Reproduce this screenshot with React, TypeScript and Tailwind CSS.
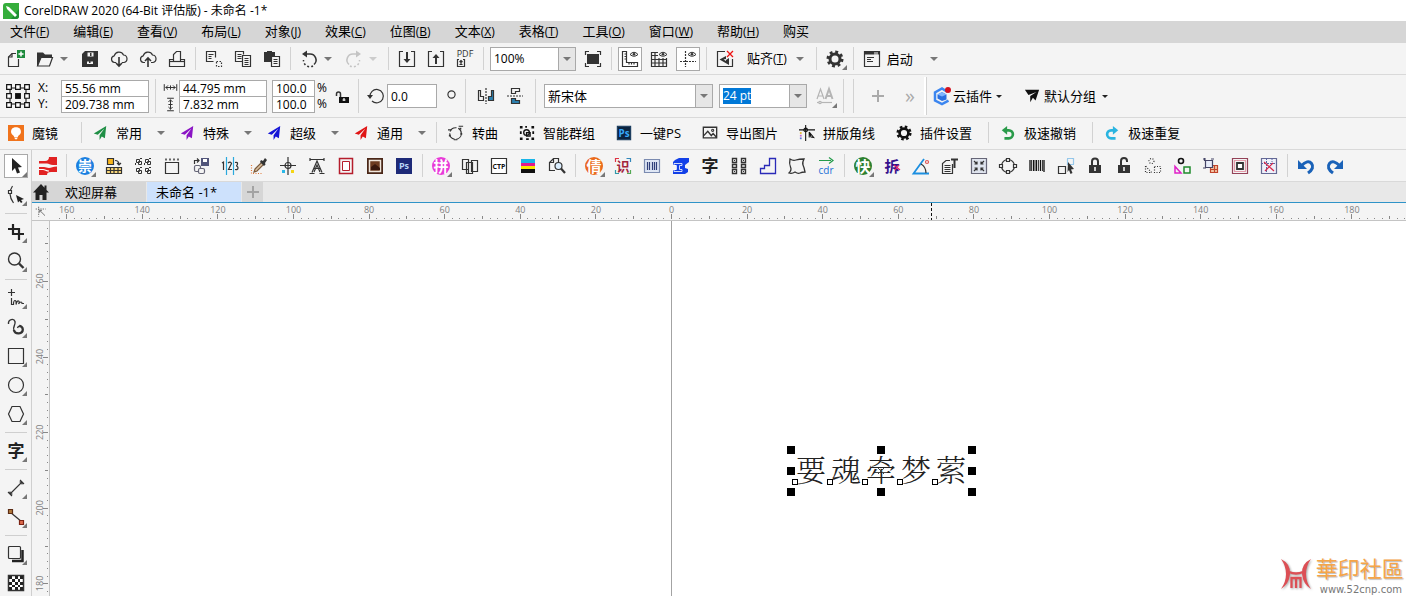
import type { ReactNode } from 'react'

const D = '#333'
const PAPER = '#f4f4f4'

const glyph = (char: string, color: string, size = 16) => (
  <text x="9" y={9 + size * 0.37} textAnchor="middle" fontSize={size} fontWeight="700" fill={color} stroke="none">
    {char}
  </text>
)

const plane = (color: string) => (
  <path d="M16 1L2 9.5l4.5 1.5L14 4 8.5 11.5V17l2.5-4 3.5 2z" fill={color} stroke="none" />
)

const gear = (
  <>
    <circle cx="9" cy="9" r="5" strokeWidth="3" />
    <circle cx="9" cy="9" r="7" strokeWidth="3" strokeDasharray="2.8 2.7" />
  </>
)

const cloud = 'M6 12.5H4.5a3.4 3.4 0 0 1-.3-6.7A5 5 0 0 1 13.5 5a3.8 3.8 0 0 1 .5 7.5h-2'

// All drawings share an 18 x 18 grid
const icons: Record<string, ReactNode> = {
  new: (
    <>
      <path d="M9 3.5H5L1.5 7v9.5h10V9" />
      <path d="M1.5 7H5V3.5" />
      <path d="M10 0h8v8h-8z" fill="#1d8a3c" stroke="none" />
      <path d="M14 1.500v5M11.500 4h5" stroke="#fff" strokeWidth="1.500" />
    </>
  ),
  open: (
    <>
      <path d="M1 2.500h6l2 2h7v3H5L2.500 16H1z" fill={D} stroke="none" />
      <path d="M5 7.500h11.500l-3 8.500h-12z" fill={PAPER} />
    </>
  ),
  save: (
    <>
      <path d="M4 1h13v16H1V4z" fill={D} stroke="none" />
      <path d="M6.500 2.500h6v4h-6zM6 11.500h6v2.500H6z" fill={PAPER} stroke="none" />
      <path d="M9 3h1.500v3H9zM8 11h1.500v2H8z" fill={D} stroke="none" />
    </>
  ),
  cloudDown: (
    <>
      <path d={cloud} />
      <path d="M9 7v9M6 13l3 3 3-3" strokeWidth="1.6" />
    </>
  ),
  cloudUp: (
    <>
      <path d={cloud} />
      <path d="M9 17V8M6 11l3-3 3 3" strokeWidth="1.6" />
    </>
  ),
  print: (
    <>
      <path d="M5.500 11.500v-7l3-3h4v10" />
      <path d="M5 9.500H1.500v7h15v-7h-4" />
      <path d="M1.500 11.500h15" />
    </>
  ),
  cut: (
    <>
      <path d="M8.500 11.500h-7v-10h9v6M3.500 4.500h5M3.500 6.500h3M3.500 8.500h3" />
      <path d="M11.500 11.500h5v5h-5z" strokeDasharray="1.500 1.500" />
    </>
  ),
  copy: (
    <>
      <path d="M9 11.500H1.500v-10h8v3M3.500 4.500h4M3.500 6.500h4M3.500 8.500h4" />
      <path d="M8.500 5.500h8v11h-8zM10.500 8.500h4M10.500 10.500h4M10.500 12.500h4M10.500 14.500h4" fill={PAPER} />
    </>
  ),
  paste: (
    <>
      <path d="M1 2h3V1h5v1h3v10H1z" fill={D} stroke="none" />
      <path d="M8.500 6.500h8v10h-8zM10.500 9.500h4M10.500 11.500h4M10.500 13.500h4" fill={PAPER} />
    </>
  ),
  undo: (
    <>
      <path d="M5 4h5a6 6 0 0 1 4 10.500" strokeWidth="1.500" />
      <path d="M13 16a6.500 6.500 0 0 1-9.500-6" strokeWidth="1.500" strokeDasharray="2 2" />
      <path d="M7 .5L2 4l5 3.500z" fill={D} stroke="none" />
    </>
  ),
  redo: (
    <g stroke="#c4c4c4">
      <path d="M13 4H8a6 6 0 0 0-4 10.500" strokeWidth="1.500" />
      <path d="M5 16a6.500 6.500 0 0 0 9.500-6" strokeWidth="1.500" strokeDasharray="2 2" />
      <path d="M11 .5L16 4l-5 3.500z" fill="#c4c4c4" stroke="none" />
    </g>
  ),
  import: (
    <>
      <path d="M5 1.500H1.500v15h15v-15H13" />
      <path d="M9 2v10" strokeWidth="2" />
      <path d="M5.500 9L9 13l3.500-4z" fill={D} stroke="none" />
    </>
  ),
  export: (
    <>
      <path d="M5 1.500H1.500v15h15v-15H13" />
      <path d="M9 6v8" strokeWidth="2" />
      <path d="M5.500 8L9 4l3.500 4z" fill={D} stroke="none" />
    </>
  ),
  pdf: (
    <>
      <text x="9" y="7" textAnchor="middle" fontSize="9" fill={D} stroke="none">PDF</text>
      <path d="M3 9.500H1.500v7h7v-7H7M5 15v-5M3.500 12L5 10.500 6.500 12M3.500 14.500h3" />
    </>
  ),
  fullscreen: (
    <>
      <path d="M3 4h12v10H3z" fill={D} stroke="none" />
      <path d="M1.500 5V1.500H5M13 1.500h3.500V5M16.500 13v3.500H13M5 16.500H1.500V13" />
    </>
  ),
  ruler: (
    <>
      <path d="M1.500 1.500h4v11h11v4h-15zM3.500 4h2M3.500 6.500h2M3.500 9h2M8 14.500v-2M10.500 14.500v-2M13 14.500v-2" />
      <path d="M9 4.500q4-4.500 8 0q-4 3.500-8 0z" strokeWidth="1" />
      <circle cx="13" cy="4.200" r="1.300" fill={D} stroke="none" />
    </>
  ),
  grid: (
    <>
      <path d="M8 2.500H1.500v14h15V8M1.500 5.500H8M1.500 9.500h15M1.500 13h15M5 2.500v14M9 8v8.500M13 8v8.500" />
      <path d="M9 4.500q4-4.500 8 0q-4 3.500-8 0z" strokeWidth="1" />
      <circle cx="13" cy="4.200" r="1.300" fill={D} stroke="none" />
    </>
  ),
  guides: (
    <>
      <path d="M6.500 1v16M1 11.500h16" strokeDasharray="2 1" />
      <path d="M9 4.500q4-4.500 8 0q-4 3.500-8 0z" strokeWidth="1" />
      <circle cx="13" cy="4.200" r="1.300" fill={D} stroke="none" />
    </>
  ),
  snapOff: (
    <>
      <path d="M9 1.500H1.500v15h15V9" />
      <path d="M3.500 9.500L10 6v3l-2.500.500L10 11v-1l3-2v7z" fill={D} stroke="none" />
      <path d="M11 1l6 6M17 1l-6 6" stroke="#e11" strokeWidth="1.300" />
    </>
  ),
  options: <g>{gear}</g>,
  launch: (
    <>
      <path d="M1.500 1.500h15v15h-15z" />
      <path d="M1.500 3h15" strokeWidth="3" strokeDasharray="10 1 1 1" />
      <path d="M4 7.500h7M4 9.500h4M4 11.500h6" />
    </>
  ),
  lock: (
    <>
      <path d="M5.500 10V7a1.500 1.500 0 0 0-4 0v2" strokeWidth="1.500" />
      <path d="M4 10h10v6H4z" fill="#111" stroke="none" />
      <path d="M9 11v3M7.500 13h3" stroke="#fff" />
    </>
  ),
  rotate: (
    <>
      <path d="M3 10a6.700 6.700 0 1 1 2 4" />
      <path d="M0 8h6l-3 4z" fill={D} stroke="none" />
    </>
  ),
  mirrorH: (
    <>
      <path d="M1.500 3.500h2v6h3v4h-5z" />
      <path d="M9 1v16" strokeDasharray="2 1" />
      <path d="M16.500 3.500h-2v6h-3v4h5z" fill="#2c7fae" />
    </>
  ),
  mirrorV: (
    <>
      <path d="M5.500 6.500v-5h8v3h-4v2z" />
      <path d="M1 9h16" strokeDasharray="2 1" />
      <path d="M5.500 11.500v5h8v-3h-4v-2z" fill="#2c7fae" />
    </>
  ),
  fontStyle: (
    <g stroke="#b5b5b5">
      <path d="M1 12L4.500 2 8 12M2.500 9h4" />
      <path d="M9.500 12L13 2l3.500 10M11 9h4" strokeWidth="2" />
      <path d="M1 15.500h15" />
      <circle cx="4" cy="15.500" r="1.200" fill={PAPER} />
    </g>
  ),
  hexagon: (
    <>
      <path d="M14.500 5L9 1.500 2 5.500v8L9 17.200l6.500-3.500" stroke="#3c86f0" strokeWidth="2.500" />
      <path d="M9 5l4.500 2.500v5L9 14l-4.500-2.500v-4z" fill="#2a6fe0" stroke="none" />
      <path d="M9 5l4.500 2.500L9 9.500 4.500 7.500z" fill="#7fb4ff" stroke="none" />
      <circle cx="15" cy="3" r="3" fill="#d3121f" stroke="none" />
    </>
  ),
  send: <path d="M1 2h16l-4 12-3-3-3 5V9l7-4.500L5 8z" fill="#111" stroke="none" />,
  mirror: (
    <>
      <path d="M0 0h18v18H0z" fill="#f0731c" stroke="none" />
      <path d="M9 2.500c4 0 6 2.500 5.500 6-.5 2.500-3 3-3.500 5H7c-.5-2-3-2.500-3.500-5-.5-3.500 1.500-6 5.500-6zM7 14h4l-1 2H8z" fill="#fff" stroke="none" />
    </>
  ),
  planeGreen: plane('#1f8f45'),
  planePurple: plane('#8a14c4'),
  planeBlue: plane('#1414d6'),
  planeRed: plane('#e01414'),
  curve: (
    <>
      <circle cx="8.500" cy="9.500" r="6.500" strokeDasharray="9 2" />
      <path d="M12 1.500h5M0 5.500h4M6.500 16.500h4" />
      <path d="M13 3h2v2h-2zM1 11h2v2H1zM14 9h2v2h-2z" fill={D} stroke="none" />
    </>
  ),
  group: (
    <g fill="#111" stroke="none">
      <path d="M1 1h3v3H1zM7 1h2v2H7zM14 1h3v3h-3zM1 7h2v3H1zM15 7h2v3h-2zM1 14h3v3H1zM8 15h3v2H8zM14 14h3v3h-3z" />
      <circle cx="8.500" cy="8.500" r="3.200" fill="none" stroke="#111" strokeWidth="1.500" />
      <path d="M8.500 8.500h4v4h-4z" fill="none" stroke="#111" strokeWidth="1.500" />
    </g>
  ),
  ps: (
    <>
      <path d="M1.500 1.500h15v15h-15z" fill="#0b2440" stroke="#163a5c" />
      <text x="9" y="13" textAnchor="middle" fontSize="11" fontWeight="700" fill="#38a8f8" stroke="none">Ps</text>
    </>
  ),
  picture: (
    <>
      <path d="M1.500 2.500h15v12h-15zM2 12l4.500-5 4 5 2-2.500 3.500 4" strokeWidth="1.500" />
      <circle cx="12" cy="6" r="1.200" />
    </>
  ),
  cropMarks: (
    <>
      <path d="M7.500 0v18M0 5.500h18M11.500 8v6M11.500 8l5 6-3-.5z" stroke="#111" />
      <circle cx="7.500" cy="5.500" r="2" stroke="#111" />
      <path d="M1 8h2v2H1z" fill="#e5b733" stroke="none" />
      <path d="M1 11h2v2H1z" fill="#c569c9" stroke="none" />
      <path d="M1 14h2v2H1z" fill="#5878d8" stroke="none" />
    </>
  ),
  gearBlack: <g stroke="#111">{gear}</g>,
  fastUndo: (
    <>
      <path d="M6 6h4a4.200 4.200 0 0 1 0 9H5" stroke="#2a9b4a" strokeWidth="3" />
      <path d="M8 1v10L2 6z" fill="#2a9b4a" stroke="none" />
    </>
  ),
  fastRedo: (
    <>
      <path d="M12 6H8a4.200 4.200 0 0 0 0 9h5" stroke="#2ab4e0" strokeWidth="3" />
      <path d="M10 1v10l6-5z" fill="#2ab4e0" stroke="none" />
    </>
  ),
  redFlag: (
    <>
      <path d="M10 0h8v8h-4c-3 0-4-1.500-6-1.500H0V4h6c2.500 0 4-1.500 4-4z" fill="#e12222" stroke="none" />
      <path d="M0 10h5c2 0 3 1 5 1s4-1.500 8-1.500V15h-6c-3 0-4 1-4 3H0z" fill="#e12222" stroke="none" />
      <path d="M0 12.500h4c2.500 0 3 1.500 6 1.500" stroke="#fff" />
    </>
  ),
  chong: (
    <>
      <circle cx="9" cy="9" r="9" fill="#1b7fe0" stroke="none" />
      {glyph('崇', '#fff', 14)}
    </>
  ),
  tableFill: (
    <>
      <path d="M2.500 1.500h6v6h-6z" fill="#f9b51b" />
      <path d="M10 3.500q4 0 4 4M12 6l2 2 2-2" />
      <path d="M1.500 10.500h15v6h-15z" fill="#fbd87a" />
      <path d="M1.500 13.500h15M5.500 10.500v6M9 10.500v6M13 10.500v6" />
    </>
  ),
  links: (
    <g strokeWidth="1">
      <path d="M2.500 2.500h3v3h-3zM4.500 4.500h3v3h-3zM11.500 2.500h3v3h-3zM13.500 4.500h3v3h-3zM2.500 11.500h3v3h-3zM4.500 13.500h3v3h-3zM11.500 11.500h3v3h-3zM13.500 13.500h3v3h-3z" />
      <path d="M6 1.500h2M1.500 6v2M15 1.500h2M10.500 6v2M6 10.500h2M15 10.500h2" />
    </g>
  ),
  pageFrame: (
    <>
      <path d="M2.500 5.500h13v11h-13z" />
      <path d="M2 2.500h15" strokeWidth="2" strokeDasharray="2 2" stroke="#666" />
    </>
  ),
  saveSwap: (
    <>
      <path d="M9 1h8v8H9z" fill="#51557a" stroke="none" />
      <path d="M11 2h4v3h-4z" fill="#fff" stroke="none" />
      <path d="M2.500 7V3.500H7M5 1.500l2 2-2 2" />
      <rect x="2.500" y="8.500" width="6" height="6" rx="1.500" stroke="#667" />
      <rect x="6.500" y="11.500" width="6" height="5" rx="1.500" fill={PAPER} stroke="#667" />
    </>
  ),
  numbering: (
    <>
      <path d="M5.500 0v18M12.500 0v18" stroke="#2aa9dd" />
      <path d="M1 6l1.500-1v8M7 6q2.500-2 3.500 0.500L7.500 12.500H11M14 5.500q3-.5 2.500 1.500T15 9q2 0 2 2t-3 1.500" />
    </>
  ),
  eyedropper: (
    <>
      <path d="M5 12l7-7 2 2-7 7-3 1z" fill="#d9c0a0" stroke="#7a5a3c" />
      <path d="M11 3l2 1 2-3 2 2-2 3 .5 1.500L14 9 10 5z" fill={D} stroke="none" />
      <path d="M1.500 8v8.500H12" stroke="#e07838" strokeDasharray="1 1.500" />
    </>
  ),
  registration: (
    <>
      <circle cx="9" cy="8.500" r="3" />
      <path d="M9 0v18M1 8.500h16" />
      <path d="M3 13h3v3H3z" fill="#2ab8e8" stroke="none" />
      <path d="M12 13h3v3h-3z" fill="#f4d515" stroke="none" />
    </>
  ),
  textSpan: (
    <>
      <path d="M2 2.500h14M2 1v3M16 1v3M4 15.500L9 4l5 11.500M6 11.500h6" />
      <path d="M1.500 16.500h5M11.500 16.500h5M6 15L9 8l3 7" />
    </>
  ),
  redFrame: (
    <>
      <path d="M2.500 1.500h13v15h-13z" stroke="#b51d2c" strokeWidth="1.500" />
      <path d="M5.500 4.500h7v9h-7z" stroke="#b51d2c" strokeWidth="1" fill="#fff" />
    </>
  ),
  photo: (
    <>
      <path d="M1 1h16v16H1z" fill="#4a2718" stroke="none" />
      <path d="M3.500 3.500h11v11h-11z" fill="#6d3b20" stroke="#f0e6dc" strokeWidth="1.500" />
      <path d="M5 10l4-3 5 4v2H5z" fill="#39180d" stroke="none" />
    </>
  ),
  psBlue: (
    <>
      <path d="M1 1h16v16H1z" fill="#1e2a78" stroke="none" />
      <text x="9" y="12" textAnchor="middle" fontSize="9" fontWeight="700" fill="#b9d5f5" stroke="none">Ps</text>
    </>
  ),
  pin: (
    <>
      <circle cx="9" cy="9" r="9" fill="#e83ad8" stroke="none" />
      {glyph('拼', '#fff', 15)}
    </>
  ),
  artboards: <path d="M1.500 2.500h6v10h-6zM5.500 5.500h6v11h-6zM10.500 3.500h6v11h-6zM7.500 2.500v14" />,
  ctp: (
    <>
      <path d="M1.500 1.500h15v15h-15z" fill="#fff" />
      <text x="9" y="12" textAnchor="middle" fontSize="7" fontWeight="700" fill="#111" stroke="none">CTP</text>
    </>
  ),
  cmyk: (
    <g stroke="none">
      <path d="M2 2h14v4H2z" fill="#19b5e8" />
      <path d="M2 6h14v3H2z" fill="#e11a8c" />
      <path d="M2 9h14v3H2z" fill="#fbe800" />
      <path d="M2 12h14v4H2z" fill="#111" />
    </g>
  ),
  search: (
    <>
      <path d="M7 13.500H1.500v-8l4-4h5v4M5.500 1.500v4h-4" />
      <circle cx="10.500" cy="9" r="3.500" fill="#dcefff" />
      <path d="M13 11.500l4 4.500" strokeWidth="2.200" />
    </>
  ),
  xin: (
    <>
      <circle cx="9" cy="9" r="9" fill="#ea6a1c" stroke="none" />
      {glyph('倩', '#fff', 15)}
    </>
  ),
  shi: (
    <>
      <path d="M1.500 5V1.500H5" stroke="#d34" />
      <path d="M12.500 1.500h4V5" stroke="#38b" />
      <path d="M1.500 13v3.500H5" stroke="#39a" />
      <path d="M16.500 13v3.500H13" stroke="#5a5" />
      {glyph('识', '#a3243c', 13)}
    </>
  ),
  barcodeBlue: (
    <>
      <path d="M1.500 2.500h15v13h-15z" fill="#dfe7f5" stroke="#7b8bb0" />
      <path d="M4.500 5v8M6.500 5v8M9.500 5v8M11.500 5v8M13.500 5v8" stroke="#30407a" />
    </>
  ),
  extrude: (
    <>
      <path d="M3 3l4-2h10v4l-4 3v3l3 1v3l-3 2H1v-4h3V8H1V5z" fill="#1340e8" stroke="none" />
      <path d="M2 6.500h8v2H7.500v4H10v2H2v-2h2.500v-4H2z" stroke="#fff" strokeWidth=".8" />
    </>
  ),
  zi: glyph('字', '#222', 17),
  qrBlocks: (
    <>
      <path d="M2.500 1.500h4v4h-4zM11.500 1.500h4v4h-4zM2.500 7.500h4v3h-4zM11.500 7.500h4v3h-4zM2.500 12.500h4v4h-4zM11.500 12.500h4v4h-4z" strokeWidth="1.400" />
      <path d="M4 3h1v1H4zM13 3h1v1h-1zM4 14h1v1H4zM13 14h1v1h-1z" fill={D} stroke="none" />
    </>
  ),
  stairs: <path d="M1.500 16.500v-5h4v-3h5v-7h6v15z" stroke="#2a2ab8" strokeWidth="1.300" />,
  blob: <path d="M2 2q3 2 6 1t8-1q-2 4-1 6t2 7q-3 0-5 1t-5-1q-3 2-6 1 3-3 1.500-6T2 2z" strokeWidth="1.300" />,
  cdr: (
    <>
      <path d="M2 3.500h12M12 .5l4 3-4 3" stroke="#239b4a" />
      <text x="9" y="16.500" textAnchor="middle" fontSize="10" fill="#1a6fd6" stroke="none">cdr</text>
    </>
  ),
  kuai: (
    <>
      <circle cx="9" cy="9" r="9" fill="#2c8030" stroke="none" />
      {glyph('快', '#fff', 15)}
    </>
  ),
  chai: (
    <>
      {glyph('拆', '#34108c', 15)}
      <path d="M11 8l6 5M16 8l-4 5" stroke="#e3206a" />
    </>
  ),
  angle: (
    <>
      <path d="M12 2L1.500 16.500h15.500" stroke="#1c8fe0" strokeWidth="1.800" />
      <path d="M9 7q5 3 5 9" />
      <circle cx="15" cy="5" r="1.500" stroke="#d55" />
    </>
  ),
  docText: (
    <>
      <path d="M9 3.500H5L1.500 6.500v10h10V7M3.500 8.500h6M3.500 10.500h6M3.500 12.500h6M3.500 14.500h6" />
      <path d="M10 2.500h7M13.500 2.500V11" strokeWidth="2" />
    </>
  ),
  shrink: (
    <>
      <path d="M1.500 1.500h15v15h-15z" fill="#dfe4ee" stroke="#667" />
      <path d="M4 4l3 3M14 4l-3 3M4 14l3-3M14 14l-3-3M7 4.500V7H4.500M11 4.500V7h2.500M7 13.500V11H4.500M11 13.500V11h2.500" />
    </>
  ),
  nodes: (
    <>
      <circle cx="9" cy="9" r="6.500" />
      <path d="M7.500 1.500h3v3h-3zM7.500 13.500h3v3h-3zM.5 7.500h3v3h-3zM14.500 7.500h3v3h-3z" fill={PAPER} />
    </>
  ),
  barcode: (
    <g stroke="#111">
      <path d="M2 3v11M5.500 3v11M8.500 3v11M12.500 3v11M16 3v12" strokeWidth="1.300" />
      <path d="M3.500 3v11M7 3v11M10.500 3v11M14.500 3v11" strokeWidth=".8" />
    </g>
  ),
  selectTarget: (
    <>
      <path d="M1.500 9.500h7v7h-7z" />
      <path d="M10.500 1.500h6v6h-6z" stroke="#3a9be0" strokeDasharray="1 1" />
      <path d="M11 5l6 7-3 .5 1.500 3.500-2 1L12 13l-1.500 2z" fill={D} stroke="none" />
    </>
  ),
  padlock: (
    <>
      <path d="M6 8V4.500a3 3 0 0 1 6 0V8" strokeWidth="2" />
      <path d="M3 8h12v8H3z" fill={D} stroke="none" />
      <path d="M9 10v4" stroke="#fff" strokeWidth="1.500" />
    </>
  ),
  padlockOpen: (
    <>
      <path d="M6 8V4a3 3 0 0 1 6 0v1" strokeWidth="2" />
      <path d="M3 8h12v8H3z" fill={D} stroke="none" />
      <path d="M9 10v4" stroke="#fff" strokeWidth="1.500" />
    </>
  ),
  dotted: (
    <g strokeDasharray="1 1.500">
      <circle cx="7.500" cy="4" r="2.500" />
      <path d="M1.500 9v6.500h6zM10.500 9.500h6v6h-6z" />
    </g>
  ),
  shapes: (
    <>
      <circle cx="8" cy="4" r="2.500" stroke="#111" strokeWidth="1.600" />
      <path d="M2 9.500v6.500h6z" stroke="#e020c8" strokeWidth="1.500" />
      <path d="M11 10h6v6h-6z" stroke="#1f8a2c" strokeWidth="1.500" />
    </>
  ),
  overlap: (
    <>
      <path d="M8.500 8.500h7v7h-7z" fill="#f3c7a7" stroke="#c2452b" />
      <path d="M8.500 12.500h7M12.500 8.500v7" stroke="#c2452b" />
      <path d="M3.500 3.500h7v7h-7z" fill="#e8edfa" stroke="#446" />
      <path d="M1 2h3M2.500 1v3M9 2h3M1 11h3" stroke="#446" />
    </>
  ),
  frameIn: (
    <>
      <path d="M1.500 1.500h15v15h-15z" stroke="#944258" />
      <path d="M3.500 3.500h11v11h-11z" stroke="#d3435e" strokeDasharray="1 1" />
      <path d="M6 6h6v6H6z" fill="#fff" strokeWidth="1.800" />
    </>
  ),
  frameCross: (
    <>
      <path d="M1.500 1.500h15v15h-15z" stroke="#666a94" fill="#eef0fa" />
      <path d="M6.500 1v16M1 6.500h16M12 1v4" stroke="#5a64a0" strokeDasharray="2 1" strokeWidth="1" />
      <path d="M4 5l10 9M13 6l-8 8" stroke="#d8264a" />
    </>
  ),
  boldUndo: (
    <>
      <path d="M4 9q7-7 10.500-2.500T11 16" stroke="#1a62b8" strokeWidth="3" />
      <path d="M1 3v9h9z" fill="#1a62b8" stroke="none" />
    </>
  ),
  boldRedo: (
    <>
      <path d="M14 9Q7 2 3.500 6.500T7 16" stroke="#1a62b8" strokeWidth="3" />
      <path d="M17 3v9H8z" fill="#1a62b8" stroke="none" />
    </>
  ),
  pick: <path d="M5 1v13l3-3 2 5.500 3-1L11 10.500l4-.5z" fill="#222" stroke="none" />,
  shape: (
    <>
      <path d="M5.500 0Q0 8 6.500 17" />
      <path d="M1.500 4.500h3v3h-3z" fill={PAPER} />
      <path d="M9 9l8 4-3 1 1.500 2-1.500 1-1.500-2-1.500 1.500z" fill="#222" stroke="none" />
    </>
  ),
  crop: <path d="M6 1v5.500M6 6v5h11M1 6h11v11" stroke="#222" strokeWidth="2.200" />,
  zoom: (
    <>
      <circle cx="7.500" cy="7" r="6" strokeWidth="1.400" />
      <path d="M12 11.500l4.500 4.500" strokeWidth="2.400" />
    </>
  ),
  freehand: (
    <>
      <path d="M4.500 0v7M1 3.500h7" />
      <path d="M4.500 9v6.500h2q0-4 1.500-4t1 4q1-4 2.500-3.500t0 3q1.500-2 2.500-2t1 1.500h2" />
    </>
  ),
  artistic: (
    <>
      <path d="M1.500 6C1 1 7 0 8 3.500s-3 6-1 9" strokeWidth="1.400" />
      <path d="M6.800 12c1.500 5 9 4 9-.5 0-2.500-2-3.500-3.500-3.500" strokeWidth="2.300" />
      <path d="M13 8q-2 0-2.500 2" strokeWidth="1.400" />
    </>
  ),
  rect: <path d="M1.500 1.500h15v15h-15z" />,
  ellipse: <circle cx="9" cy="9" r="7.500" />,
  polygon: <path d="M5 1.500h8l3.500 7.500-3.500 7.500H5L1.500 9z" />,
  text: glyph('字', '#222', 17),
  dimension: <path d="M3 15L15 3M1 13l4 4M13 1l4 4M3 12.500V15h2.500M12.500 3H15v2.500" strokeWidth="1.100" />,
  connector: (
    <>
      <path d="M3 4l12 10" />
      <path d="M1.500 1.500h4v4h-4z" fill="#b07a3c" stroke="#5c2c14" />
      <path d="M12.500 12.500h4v4h-4z" fill="#dc6a4c" stroke="#7c2414" />
    </>
  ),
  shadow: (
    <>
      <path d="M15.500 5v11H5" strokeWidth="2.500" stroke="#222" />
      <rect x="1.500" y="1.500" width="12" height="12" rx="1" fill={PAPER} />
    </>
  ),
  transparency: (
    <>
      <path d="M1.500 1.500h15v15h-15z" fill="#fff" strokeWidth="1.500" />
      <path
        d="M2 2h3v3H2zM8 2h3v3H8zM13 2h3v3h-3zM5 5h3v3H5zM11 5h2v3h-2zM2 8h3v3H2zM8 8h3v3H8zM13 8h3v3h-3zM5 11h3v2H5zM11 11h2v2h-2zM2 13h3v3H2zM8 13h3v3H8zM13 13h3v3h-3z"
        fill="#222"
        stroke="none"
      />
    </>
  ),
  origin: (
    <>
      <path d="M3 3h12v12H3z" stroke="#111" strokeWidth=".8" />
      <path
        d="M.5.500h3.500v3.500H.5zM7.200 .500h3.500v3.500H7.200zM14 .500h3.500v3.500H14zM.5 7.200h3.500v3.500H.5zM14 7.200h3.500v3.500H14zM.5 14h3.500v3.500H.5zM7.200 14h3.500v3.500H7.200zM14 14h3.500v3.500H14z"
        fill="#fff"
        stroke="#111"
        strokeWidth=".9"
      />
      <path d="M6.800 6.800h4.400v4.400H6.800z" fill="#111" stroke="none" />
    </>
  ),
  widthArrow: <path d="M1.500 5v8M16.500 5v8M3 9h12M6 6.500L3.500 9 6 11.500M12 6.500l2.500 2.500-2.500 2.500M9 6.500v5" />,
  heightArrow: <path d="M5 1.500h8M5 16.500h8M9 3v12M6.500 6L9 3.500 11.500 6M6.500 12l2.500 2.500 2.500-2.500M6.500 9h5" />,
  home: <path d="M9 1L1 9.500h2.500V17H7.500v-5h3v5h4V9.500H17L14.500 7V2.500h-2v2.200z" fill="#222" stroke="none" />,
  rulerCorner: (
    <g stroke="#555">
      <path d="M1 4.500h15M5.500 1v15" strokeDasharray="2 1.500" />
      <path d="M7 6.500l8 8M7 10V6.500h3.500" />
    </g>
  ),
}

function Icon({ name, className = 'size-[18px]' }: { name: string; className?: string }) {
  return (
    <svg
      viewBox="0 0 18 18"
      fill="none"
      stroke={D}
      strokeWidth="1.2"
      className={`shrink-0 overflow-visible ${className}`}
      aria-hidden="true"
    >
      {icons[name]}
    </svg>
  )
}

function Caret({ dark = false, faded = false }: { dark?: boolean; faded?: boolean }) {
  return (
    <svg viewBox="0 0 8 4" className={dark ? 'h-[3px] w-1.5' : 'h-1 w-2'} aria-hidden="true">
      <path d="M0 0h8L4 4z" fill={dark ? '#222' : faded ? '#ccc' : '#777'} />
    </svg>
  )
}

function Tool({ name, flyout, boxed }: { name: string; flyout?: boolean; boxed?: boolean }) {
  return (
    <button type="button" aria-label={name} className="relative flex h-[29px] w-[29px] shrink-0 items-center justify-center">
      <span className={boxed ? 'flex size-6 items-center justify-center border border-[#a9a9a9] bg-white' : 'flex'}>
        <Icon name={name} />
      </span>
      {flyout && (
        <svg viewBox="0 0 5 5" className="absolute right-[3px] bottom-[3px] size-[5px]" aria-hidden="true">
          <path d="M5 0v5H0z" fill="#777" />
        </svg>
      )}
    </button>
  )
}

function CaretButton({ label, faded }: { label: string; faded?: boolean }) {
  return (
    <button type="button" aria-label={label} className="flex h-6 w-4 shrink-0 items-center pl-px">
      <Caret faded={faded} />
    </button>
  )
}

function Sep() {
  return (
    <div className="flex w-2 shrink-0 justify-center self-stretch py-1">
      <div className="w-px bg-[#d2d2d2]" />
    </div>
  )
}

function Combo({ label, value, width }: { label: string; value: string; width: string }) {
  return (
    <div className={`relative h-6 shrink-0 ${width}`}>
      <select aria-label={label} defaultValue={value} className="size-full appearance-none border border-[#a9a9a9] bg-white pl-[3px] leading-none">
        <option>{value}</option>
      </select>
      <span className="pointer-events-none absolute inset-y-px right-px flex w-[17px] items-center justify-center border-l border-[#a9a9a9] bg-[#e6e6e6]">
        <Caret />
      </span>
    </div>
  )
}

const field = 'block w-full border border-[#a9a9a9] bg-white px-[3px] text-xs'

const menus = [
  ['文件', 'F'],
  ['编辑', 'E'],
  ['查看', 'V'],
  ['布局', 'L'],
  ['对象', 'J'],
  ['效果', 'C'],
  ['位图', 'B'],
  ['文本', 'X'],
  ['表格', 'T'],
  ['工具', 'O'],
  ['窗口', 'W'],
  ['帮助', 'H'],
  ['购买', ''],
]

const planes = [
  { icon: 'planeGreen', label: '常用' },
  { icon: 'planePurple', label: '特殊' },
  { icon: 'planeBlue', label: '超级' },
  { icon: 'planeRed', label: '通用' },
]

const plugins = [
  { icon: 'curve', label: '转曲' },
  { icon: 'group', label: '智能群组' },
  { icon: 'ps', label: '一键PS' },
  { icon: 'picture', label: '导出图片' },
  { icon: 'cropMarks', label: '拼版角线' },
  { icon: 'gearBlack', label: '插件设置' },
]

// A trailing * marks a button with a flyout, | is a separator
const pluginTools =
  'redFlag | chong* tableFill links pageFrame saveSwap numbering eyedropper registration textSpan redFrame photo psBlue | pin* artboards ctp cmyk search | xin* shi barcodeBlue extrude zi qrBlocks stairs blob cdr | kuai* chai angle docText shrink nodes barcode selectTarget padlock padlockOpen dotted shapes overlap frameIn frameCross | boldUndo boldRedo'.split(' ')

const toolbox =
  'pick* shape* | crop* zoom* | freehand* artistic* rect* ellipse* polygon* | text* | dimension* connector* | shadow* transparency'.split(' ')

const STEP = 75.6

function PluginButton({ icon, label }: { icon: string; label: string }) {
  return (
    <button type="button" className="flex shrink-0 items-center gap-2">
      <Icon name={icon} className="size-4" />
      {label}
    </button>
  )
}

function TopRuler() {
  const ticks = Array.from({ length: 260 }, (_, i) => i - 81)
  return (
    <svg className="h-[17px] min-w-0 flex-1" aria-hidden="true">
      {ticks.map(t => {
        const x = Math.round(621 + (t * STEP) / 10) + 0.5
        const len = t % 10 === 0 ? 5 : t % 5 === 0 ? 3 : 1
        return <path key={t} d={`M${x} 16v-${len}`} stroke="#888" />
      })}
      {ticks.filter(t => t % 10 === 0).map(t => (
        <text key={t} x={621.5 + (t * STEP) / 10} y="10" textAnchor="middle" fontSize="9" fill="#808080">
          {Math.abs(t * 2)}
        </text>
      ))}
      <path d="M881.500 0v17" stroke="#111" strokeDasharray="3 2" />
    </svg>
  )
}

function SideRuler() {
  const ticks = Array.from({ length: 160 }, (_, i) => i - 7)
  return (
    <svg className="w-[17px] flex-1" aria-hidden="true">
      {ticks.map(t => {
        const y = Math.round(60 + (t * STEP) / 10) + 0.5
        const len = t % 10 === 0 ? 5 : t % 5 === 0 ? 3 : 1
        return <path key={t} d={`M16 ${y}h-${len}`} stroke="#888" />
      })}
      {ticks.filter(t => t % 10 === 0).map(t => {
        const y = 60 + (t * STEP) / 10
        return (
          <text key={t} x="11" y={y} transform={`rotate(-90 11 ${y})`} textAnchor="middle" fontSize="9" fill="#808080">
            {260 - t * 2}
          </text>
        )
      })}
    </svg>
  )
}

function MenuBar() {
  return (
    <nav className="flex h-[22px] shrink-0 items-center bg-[#d6d6d6] pb-0.5">
      {menus.map(([label, key]) => (
        <button type="button" key={label} className="mr-6 flex items-baseline whitespace-nowrap first:ml-2.5">
          {label}
          {key && (
            <span className="text-xs">
              (<u>{key}</u>)
            </span>
          )}
        </button>
      ))}
    </nav>
  )
}

function StandardBar() {
  return (
    <div className="flex h-8 shrink-0 items-center border-b border-[#d9d9d9] pl-px">
      <Tool name="new" />
      <Tool name="open" />
      <CaretButton label="open list" />
      <Tool name="save" />
      <Tool name="cloudDown" />
      <Tool name="cloudUp" />
      <Tool name="print" />
      <Sep />
      <Tool name="cut" />
      <Tool name="copy" />
      <Tool name="paste" />
      <Sep />
      <Tool name="undo" />
      <CaretButton label="undo list" />
      <Tool name="redo" />
      <CaretButton label="redo list" faded />
      <Sep />
      <Tool name="import" />
      <Tool name="export" />
      <Tool name="pdf" />
      <Sep />
      <div className="mr-0.5 ml-[3px] text-xs">
        <Combo label="zoom level" value="100%" width="w-[86px]" />
      </div>
      <Tool name="fullscreen" />
      <Sep />
      <Tool name="ruler" boxed />
      <Tool name="grid" />
      <Tool name="guides" boxed />
      <Sep />
      <Tool name="snapOff" />
      <button type="button" className="flex shrink-0 items-baseline px-2">
        贴齐
        <span className="text-xs">
          (<u>T</u>)
        </span>
      </button>
      <CaretButton label="snap list" />
      <div className="flex self-stretch pl-0.5"><Sep /></div>
      <Tool name="options" flyout />
      <Sep />
      <Tool name="launch" />
      <button type="button" className="shrink-0 pr-4">启动</button>
      <CaretButton label="launch list" />
    </div>
  )
}

function PropertyBar() {
  return (
    <div className="flex h-[43px] shrink-0 items-center border-b border-[#d9d9d9] pl-1.5">
      <Icon name="origin" className="size-6" />
      <div className="ml-2 grid w-[23px] shrink-0 text-xs leading-4">
        <label htmlFor="pos-x">X:</label>
        <label htmlFor="pos-y">Y:</label>
      </div>
      <div className="w-[88px] shrink-0">
        <input id="pos-x" defaultValue="55.56 mm" className={`${field} h-[17px]`} />
        <input id="pos-y" defaultValue="209.738 mm" className={`${field} -mt-px h-[17px]`} />
      </div>
      <div className="ml-0.5 flex self-stretch"><Sep /></div>
      <div className="ml-1 grid shrink-0 gap-0.5">
        <Icon name="widthArrow" className="size-[15px]" />
        <Icon name="heightArrow" className="size-[15px]" />
      </div>
      <div className="mr-[5px] ml-px w-[88px] shrink-0">
        <input aria-label="width" defaultValue="44.795 mm" className={`${field} h-[17px]`} />
        <input aria-label="height" defaultValue="7.832 mm" className={`${field} -mt-px h-[17px]`} />
      </div>
      <div className="w-[43px] shrink-0">
        <input aria-label="scale x" defaultValue="100.0" className={`${field} h-[17px]`} />
        <input aria-label="scale y" defaultValue="100.0" className={`${field} -mt-px h-[17px]`} />
      </div>
      <div className="mr-2 ml-0.5 grid shrink-0 text-xs leading-4">
        <span>%</span>
        <span>%</span>
      </div>
      <Icon name="lock" />
      <div className="mx-0.5 flex self-stretch"><Sep /></div>
      <div className="ml-0.5 flex shrink-0 items-center gap-0.5">
        <Icon name="rotate" />
        <input aria-label="rotation" defaultValue="0.0" className="h-6 w-[50px] border border-[#a9a9a9] bg-white px-[3px] text-xs" />
      </div>
      <svg viewBox="0 0 10 10" className="mr-1.5 mb-1 ml-2.5 size-[9px] shrink-0" aria-hidden="true">
        <circle cx="5" cy="5" r="4" fill="none" stroke={D} strokeWidth="1.300" />
      </svg>
      <Sep />
      <div className="flex shrink-0 px-0.5">
        <Tool name="mirrorH" />
        <Tool name="mirrorV" />
      </div>
      <Sep />
      <div className="flex shrink-0 gap-1.5 pl-1">
        <Combo label="font" value="新宋体" width="w-[169px]" />
        <div className="flex h-6 w-[88px] border border-[#a9a9a9] bg-white">
          <div className="flex flex-1 items-center pl-[3px]">
            <input aria-label="font size" defaultValue="24 pt" className="h-4 w-7 bg-[#0078d7] text-xs text-white" />
          </div>
          <button type="button" aria-label="font size list" className="flex w-[17px] items-center justify-center border-l border-[#a9a9a9] bg-[#e6e6e6]">
            <Caret />
          </button>
        </div>
      </div>
      <div className="ml-1 flex self-stretch">
        <div className="flex items-center"><Tool name="fontStyle" flyout /></div>
        <Sep />
      </div>
      <div className="flex self-stretch pl-0.5"><Sep /></div>
      <button type="button" aria-label="add" className="ml-2.5 flex w-5 shrink-0 justify-center">
        <svg viewBox="0 0 12 12" className="size-3" aria-hidden="true">
          <path d="M6 0v12M0 6h12" stroke="#aaa" strokeWidth="2" />
        </svg>
      </button>
      <button type="button" aria-label="more" className="ml-3.5 w-4 shrink-0 text-xl leading-none text-[#aaa]">»</button>
      <div className="mx-1.5 my-0.5 w-[3px] shrink-0 self-stretch border-r border-[#d2d2d2] bg-white" />
      <button type="button" className="flex shrink-0 items-center gap-0.5">
        <Icon name="hexagon" />
        云插件
        <span className="ml-0.5"><Caret dark /></span>
      </button>
      <button type="button" className="ml-[22px] flex shrink-0 items-center gap-1">
        <Icon name="send" className="size-4" />
        默认分组
        <span className="ml-0.5"><Caret dark /></span>
      </button>
    </div>
  )
}

function PluginBar() {
  return (
    <div className="flex h-8 shrink-0 items-center border-b border-[#d9d9d9] pb-0.5 pl-2">
      <PluginButton icon="mirror" label="魔镜" />
      <div className="mr-[7px] ml-[19px] flex self-stretch"><Sep /></div>
      {planes.map(p => (
        <div key={p.label} className="flex shrink-0 items-center">
          <PluginButton icon={p.icon} label={p.label} />
          <button type="button" aria-label={`${p.label} list`} className="flex h-6 w-[37px] items-center justify-center">
            <Caret />
          </button>
        </div>
      ))}
      <div className="-ml-2 flex self-stretch"><Sep /></div>
      <div className="ml-2 flex shrink-0 gap-[21px]">
        {plugins.map(p => <PluginButton key={p.label} {...p} />)}
      </div>
      <div className="mr-2 ml-3 flex self-stretch"><Sep /></div>
      <PluginButton icon="fastUndo" label="极速撤销" />
      <div className="mr-2 ml-3 flex self-stretch"><Sep /></div>
      <PluginButton icon="fastRedo" label="极速重复" />
    </div>
  )
}

const handles = [
  'left-0 top-0', 'left-[90px] top-0', 'left-[181px] top-0',
  'left-0 top-[21px]', 'left-[181px] top-[21px]',
  'left-0 top-[42px]', 'left-[90px] top-[42px]', 'left-[181px] top-[42px]',
]

function Canvas() {
  return (
    <main className="relative min-w-0 flex-1 overflow-hidden bg-white">
      <div className="absolute inset-y-0 left-[621px] w-px bg-[#a3a3a3]" />
      <div className="absolute top-[225px] left-[737px] h-[50px] w-[189px]">
        <div className="absolute top-1.5 left-[9px] flex font-['Noto_Serif_CJK_SC','Noto_Sans_CJK_SC',serif] text-[30px] leading-8 font-light text-[#222]">
          {Array.from('要魂牵梦萦').map(char => (
            <span key={char} className="relative w-[35px]">
              {char}
              <i className="absolute top-[27px] -left-1 size-1.5 border border-black bg-white" />
            </span>
          ))}
        </div>
        {handles.map(pos => <i key={pos} className={`absolute size-2 bg-black ${pos}`} />)}
        <svg viewBox="0 0 6 6" className="absolute top-[22px] left-[91px] size-1.5" aria-hidden="true">
          <path d="M0 0l6 6M6 0L0 6" stroke="#444" />
        </svg>
      </div>

      {/* Watermark */}
      <div className="absolute right-0 bottom-0 flex items-center gap-1">
        <svg viewBox="0 0 32 32" className="size-8 drop-shadow-[1px_1px_1px_rgba(0,0,0,0.35)]" aria-hidden="true">
          <path d="M1 1q10 5 9 15T1 31q5-7 5-15T1 1zM31 1q-10 5-9 15t9 15q-5-7-5-15t5-15z" fill="#dc4f55" />
          <path d="M9 14q7 3 14 0M11.500 30V20h9v10M16 20v10" fill="none" stroke="#dc4f55" strokeWidth="2.300" />
        </svg>
        <div>
          <div className="text-[22px] leading-8 text-[#f5a548] [text-shadow:1px_1px_1px_#bbb]">華印社區</div>
          <div className="px-1 font-['DejaVu_Sans',sans-serif] text-[10px] leading-3 text-[#777]">www.52cnp.com</div>
        </div>
      </div>
    </main>
  )
}

export default function App() {
  return (
    <div className="flex h-screen flex-col overflow-hidden bg-[#f4f4f4] font-['Open_Sans','Noto_Sans_CJK_SC',sans-serif] text-[13px] leading-4 text-black">
      <header className="flex h-[21px] shrink-0 items-center gap-[5px] bg-white pl-[3px]">
        <svg viewBox="0 0 16 16" className="size-4" aria-hidden="true">
          <path d="M3 0h13v13q0 3-3 3H0V3q0-3 3-3z" fill="#35ad3b" />
          <path d="M8 16h5q3 0 3-3V6z" fill="#1d8f32" />
          <path d="M3 3l3 1 8 8-2 2-8-8z" fill="#fff" />
        </svg>
        <h1 className="text-xs">CorelDRAW 2020 (64-Bit 评估版) - 未命名 -1*</h1>
      </header>
      <MenuBar />
      <StandardBar />
      <PropertyBar />
      <PluginBar />
      <div className="flex min-h-0 flex-1">
        <aside className="flex w-8 shrink-0 flex-col items-center border-r border-[#cfcfcf] pt-px">
          {toolbox.map((t, i) =>
            t === '|' ? (
              <div key={i} className="flex h-2 w-[22px] shrink-0 items-center">
                <div className="h-px w-full bg-[#cfcfcf]" />
              </div>
            ) : (
              <Tool key={i} name={t.replace('*', '')} flyout={t.endsWith('*')} boxed={t === 'pick*'} />
            )
          )}
        </aside>
        <div className="flex min-w-0 flex-1 flex-col">
          <div className="flex h-8 shrink-0 items-center border-b border-[#d9d9d9] pl-px">
            {pluginTools.map((t, i) =>
              t === '|' ? <Sep key={i} /> : <Tool key={i} name={t.replace('*', '')} flyout={t.endsWith('*')} />
            )}
          </div>
          <div className="flex h-[21px] shrink-0 border-b border-[#2f93c8] bg-[#e8e8e8]">
            <button type="button" className="flex w-[114px] items-center gap-[15px] bg-[#d6d6d6]">
              <Icon name="home" />
              欢迎屏幕
            </button>
            <button type="button" className="ml-px w-[94px] bg-[#cde1fc] pl-[9px] text-left">未命名 -1*</button>
            <button type="button" aria-label="new tab" className="ml-px flex w-[21px] items-center justify-center bg-[#d6d6d6]">
              <svg viewBox="0 0 12 12" className="size-3" aria-hidden="true">
                <path d="M6 0v12M0 6h12" stroke="#a3a3a3" strokeWidth="2" />
              </svg>
            </button>
          </div>
          <div className="flex h-[18px] shrink-0 border-b border-[#c4c4c4]">
            <div className="flex w-[18px] items-center justify-center">
              <Icon name="rulerCorner" className="size-3" />
            </div>
            <TopRuler />
          </div>
          <div className="flex min-h-0 flex-1">
            <div className="flex w-[18px] shrink-0 flex-col border-r border-[#c4c4c4]">
              <SideRuler />
            </div>
            <Canvas />
          </div>
        </div>
      </div>
    </div>
  )
}
